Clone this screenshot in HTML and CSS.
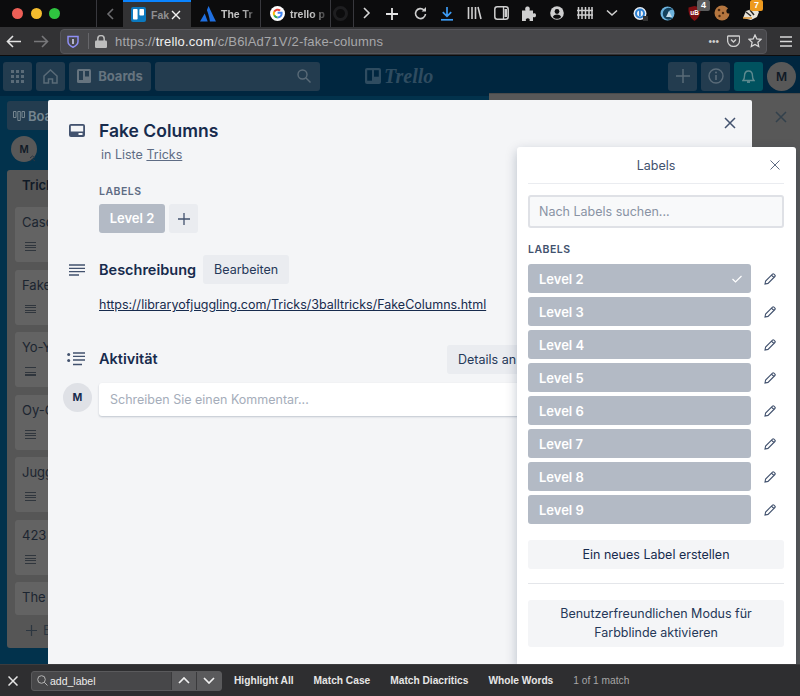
FILE: index.html
```html
<!DOCTYPE html>
<html lang="de">
<head>
<meta charset="utf-8">
<title>Fake Columns</title>
<link rel="stylesheet" href="styles.css">
</head>
<body>
<div class="browser">

  <div class="tabbar">
    <div class="lights"><i class="red"></i><i class="yellow"></i><i class="green"></i></div>
    <div class="tabscroll">
      <svg width="9" height="14" viewBox="0 0 9 14"><path d="M7 2 2 7l5 5" fill="none" stroke="#6d6d70" stroke-width="1.6"/></svg>
    </div>
    <div class="tab active">
      <svg width="15" height="15" viewBox="0 0 15 15"><rect width="15" height="15" rx="2" fill="#0b79bf"/><rect x="2" y="2" width="4.6" height="10.5" rx=".8" fill="#fff"/><rect x="8.4" y="2" width="4.6" height="6.6" rx=".8" fill="#fff"/></svg>
      <span class="tabtitle">Fak</span>
      <svg class="tabclose" width="10" height="10" viewBox="0 0 10 10"><path d="M1 1l8 8M9 1 1 9" stroke="#f2f2f2" stroke-width="1.4"/></svg>
    </div>
    <div class="tab">
      <svg width="16" height="16" viewBox="0 0 16 16"><path d="M8.6 0c2.2 4.6 4.6 10.4 7.4 15.5h-6.100C9.500 11 7.600 6 6.900 4.300 7.400 2.900 8 1.300 8.600 0zM4.700 7.500 7.700 15.500H0z" fill="#1f6fe0"/></svg>
      <span class="tabtitle">The Tr</span>
    </div>
    <div class="tab">
      <svg width="15" height="15" viewBox="0 0 15 15"><circle cx="7.500" cy="7.500" r="7.500" fill="#fff"/><path d="M7.600 6.800h4c.3 2.600-1.300 4.600-4 4.600" fill="none" stroke="#4285f4" stroke-width="2"/><path d="M4.200 5.800a3.800 3.800 0 0 1 5.900-1.200" fill="none" stroke="#ea4335" stroke-width="2"/><path d="M3.800 7.500c0-.6.100-1.200.4-1.700M3.800 7.500c0 .6.100 1.200.4 1.800" fill="none" stroke="#fbbc05" stroke-width="2"/><path d="M4.200 9.300a3.800 3.800 0 0 0 3.400 2.100" fill="none" stroke="#34a853" stroke-width="2"/></svg>
      <span class="tabtitle">trello p</span>
    </div>
    <div class="tab stub">
      <svg width="15" height="15" viewBox="0 0 15 15"><circle cx="7.500" cy="7.500" r="6" fill="none" stroke="#1e1e20" stroke-width="3"/></svg>
    </div>
    <div class="tabtools">
      <svg class="t-next" width="9" height="14" viewBox="0 0 9 14"><path d="M2 2l5 5-5 5" fill="none" stroke="#d6d6d6" stroke-width="1.600"/></svg>
      <svg class="t-plus" width="14" height="14" viewBox="0 0 14 14"><path d="M7 1v12M1 7h12" stroke="#e4e4e4" stroke-width="1.800"/></svg>
      <svg class="t-reload" width="15" height="15" viewBox="0 0 15 15"><path d="M12.500 8a5 5 0 1 1-1.500-4" fill="none" stroke="#cfcfcf" stroke-width="1.600"/><path d="M13 1v4.400H8.600z" fill="#cfcfcf"/></svg>
      <svg class="t-down" width="14" height="15" viewBox="0 0 14 15"><path d="M7 1v9M2.800 6.200 7 10.400l4.200-4.200" fill="none" stroke="#3d9bf3" stroke-width="1.700"/><path d="M1 13.800h12" stroke="#3d9bf3" stroke-width="1.700"/></svg>
      <svg class="t-lib" width="15" height="14" viewBox="0 0 15 14"><path d="M1.500 1v12M5 1v12M8.500 1v12M11 1l3 12" stroke="#cfcfcf" stroke-width="1.600" fill="none"/></svg>
      <svg class="t-side" width="15" height="14" viewBox="0 0 15 14"><rect x=".8" y=".8" width="13.400" height="12.400" rx="2.500" fill="none" stroke="#cfcfcf" stroke-width="1.500"/><path d="M9.500 1v12" stroke="#cfcfcf" stroke-width="1.300"/><path d="M10.500 3h2.500v8h-2.500z" fill="#cfcfcf"/></svg>
      <svg class="t-puzzle" width="15" height="15" viewBox="0 0 15 15"><path d="M1 4.500h3.500c-1-2.500.5-4 2-4s3 1.500 2 4H12v3.200c2-.9 3-.1 3 1.600s-1 2.600-3 1.700V15H8.500c.8-2-.3-2.800-1.700-2.800S4.300 13 5 15H1z" fill="#cfcfcf"/></svg>
      <svg class="t-acct" width="14" height="14" viewBox="0 0 14 14"><circle cx="7" cy="7" r="6.800" fill="#cfcfcf"/><circle cx="7" cy="5.500" r="2.400" fill="#0c0c0d"/><path d="M2.800 11c1-2 2.500-2.600 4.200-2.600s3.200.6 4.200 2.600C10 12.300 8.500 12.800 7 12.800S4 12.300 2.800 11z" fill="#0c0c0d"/></svg>
      <svg class="t-fence" width="16" height="14" viewBox="0 0 16 14"><path d="M1.500 1v12M5 1v12M8.500 1v12M12 1v12M15 1v12M0 4.500h16M0 9h16" stroke="#cfcfcf" stroke-width="1.500" fill="none"/></svg>
      <svg class="t-more" width="12" height="8" viewBox="0 0 12 8"><path d="M1 1.500 6 6l5-4.500" fill="none" stroke="#cfcfcf" stroke-width="1.600"/></svg>
      <svg class="t-ext1" width="15" height="15" viewBox="0 0 15 15"><circle cx="7" cy="7.500" r="6.500" fill="#e8eef4"/><circle cx="7" cy="7.500" r="4" fill="none" stroke="#2c7fd0" stroke-width="2"/><rect x="6" y="4" width="1.800" height="6" fill="#2c7fd0"/><rect x="10" y="10" width="5" height="5" fill="#333"/></svg>
      <svg class="t-ext2" width="15" height="15" viewBox="0 0 15 15"><circle cx="7.500" cy="7.500" r="7" fill="#6db3dd"/><path d="M13 3.500a6 6 0 1 0 0 8.500 5 5 0 0 1-5-4.500 5 5 0 0 1 5-4z" fill="#14425e"/><path d="M6 11 9 5l3 6z" fill="#c5dcea"/></svg>
      <svg class="t-ublock" width="13" height="15" viewBox="0 0 13 15"><path d="M.5 1.500 6.500 0l6 1.500c.4 6-1.600 10.500-6 13.500C2.100 12 .1 7.500.5 1.500z" fill="#7f0f12"/><text x="6.500" y="9" class="ub">uB</text></svg>
      <svg class="t-cookie" width="16" height="16" viewBox="0 0 16 16"><circle cx="8" cy="8" r="7.500" fill="#b5763f"/><circle cx="5" cy="5" r="1.300" fill="#4c2a12"/><circle cx="9" cy="8" r="1.200" fill="#4c2a12"/><circle cx="5.500" cy="11" r="1.200" fill="#4c2a12"/><circle cx="15" cy="6" r="2.600" fill="#0c0c0d"/></svg>
      <svg class="t-tiger" width="18" height="13" viewBox="0 0 18 13"><path d="M1 11 4 4l9-3 4 4-2 5-6 3z" fill="#e8e4da"/><path d="M4 5l5 4M8 3l4 5" stroke="#2b2b2b" stroke-width="1.500"/><path d="M1 11h9" stroke="#d8912c" stroke-width="1.500"/></svg>
      <span class="ext-badge gray">4</span>
      <span class="ext-badge orange">7</span>
    </div>
  </div>

  <div class="toolbar">
    <svg class="nav-back" width="15" height="13" viewBox="0 0 15 13"><path d="M15 6.500H2M7 1 1.500 6.500 7 12" fill="none" stroke="#e2e2e2" stroke-width="1.600"/></svg>
    <svg class="nav-fwd" width="15" height="13" viewBox="0 0 15 13"><path d="M0 6.500h13M8 1l5.500 5.500L8 12" fill="none" stroke="#77777a" stroke-width="1.600"/></svg>
    <div class="urlbar">
      <svg width="12" height="13" viewBox="0 0 12 13"><path d="M1 1.500h10v5c0 2.800-2.200 4.500-5 5.700-2.800-1.200-5-2.900-5-5.700z" fill="none" stroke="#8f8ff5" stroke-width="1.500"/><path d="M6 4v5" stroke="#d8d8f8" stroke-width="1.500"/></svg>
      <span class="urlsep"></span>
      <svg width="12" height="13" viewBox="0 0 12 13"><rect x="0" y="5.500" width="12" height="7.500" rx="1.200" fill="#bdbdbd"/><path d="M2.800 6V3.800a3.200 3.200 0 0 1 6.400 0V6" fill="none" stroke="#bdbdbd" stroke-width="1.500"/></svg>
      <span class="url">https://<b>trello.com</b>/c/B6lAd71V/2-fake-columns</span>
      <span class="dots">•••</span>
      <svg width="13" height="12" viewBox="0 0 13 12"><path d="M1 1h11a.6.600 0 0 1 .6.600V5.500a6 6 0 0 1-12 0V1.600A.6.600 0 0 1 1 1z" fill="none" stroke="#cfcfcf" stroke-width="1.300"/><path d="M4 4.500l2.500 2.500L9 4.500" fill="none" stroke="#cfcfcf" stroke-width="1.400"/></svg>
      <svg width="14" height="14" viewBox="0 0 14 14"><path d="M7 1l1.800 3.900 4.200.5-3.100 2.900.8 4.200L7 10.400l-3.700 2.100.8-4.200L1 5.400l4.200-.5z" fill="none" stroke="#d8d8d8" stroke-width="1.300"/></svg>
    </div>
    <svg class="menu" width="12" height="11" viewBox="0 0 12 11"><path d="M0 1h12M0 5.500h12M0 10h12" stroke="#d8d8d8" stroke-width="1.600"/></svg>
  </div>

  <div class="page">
    <header class="trello-head">
      <span class="hbtn">
        <svg width="13" height="13" viewBox="0 0 13 13" fill="#5a6b78"><rect width="3" height="3"/><rect x="5" width="3" height="3"/><rect x="10" width="3" height="3"/><rect y="5" width="3" height="3"/><rect x="5" y="5" width="3" height="3"/><rect x="10" y="5" width="3" height="3"/><rect y="10" width="3" height="3"/><rect x="5" y="10" width="3" height="3"/><rect x="10" y="10" width="3" height="3"/></svg>
      </span>
      <span class="hbtn">
        <svg width="15" height="15" viewBox="0 0 15 15"><path d="M1 7 7.500 1 14 7v7H9.500v-4h-4v4H1z" fill="none" stroke="#5a6b78" stroke-width="1.500"/></svg>
      </span>
      <span class="hbtn boards">
        <svg width="14" height="14" viewBox="0 0 14 14"><rect width="14" height="14" rx="1.500" fill="#66747f"/><rect x="2" y="2" width="4" height="9" fill="#253d50"/><rect x="8" y="2" width="4" height="5.500" fill="#253d50"/></svg>
        Boards
      </span>
      <span class="hsearch">
        <svg width="14" height="14" viewBox="0 0 14 14"><circle cx="5.500" cy="5.500" r="4.500" fill="none" stroke="#5a6b78" stroke-width="1.400"/><path d="M9 9l4.500 4.500" stroke="#5a6b78" stroke-width="1.400"/></svg>
      </span>
      <span class="logo">
        <svg width="16" height="16" viewBox="0 0 16 16"><rect width="16" height="16" rx="2" fill="#2f4c60"/><rect x="2.200" y="2.200" width="4.800" height="10.500" fill="#00263f"/><rect x="9" y="2.200" width="4.800" height="6.500" fill="#00263f"/></svg>
        Trello
      </span>
      <span class="hbtn push">
        <svg width="14" height="14" viewBox="0 0 14 14"><path d="M7 0v14M0 7h14" stroke="#5a6b78" stroke-width="1.500"/></svg>
      </span>
      <span class="hbtn">
        <svg width="16" height="16" viewBox="0 0 16 16"><circle cx="8" cy="8" r="7" fill="none" stroke="#5a6b78" stroke-width="1.400"/><path d="M8 7v5" stroke="#5a6b78" stroke-width="1.600"/><circle cx="8" cy="4.600" r="1" fill="#5a6b78"/></svg>
      </span>
      <span class="hbtn bell">
        <svg width="13" height="15" viewBox="0 0 13 15"><path d="M1 11.500c1.200-1 1.500-2 1.500-4.500C2.500 4 4.200 2 6.500 2s4 2 4 5c0 2.500.3 3.500 1.500 4.500z" fill="none" stroke="#5e8a8f" stroke-width="1.400"/><path d="M5 13h3" stroke="#5e8a8f" stroke-width="1.800"/></svg>
      </span>
      <span class="havatar">M</span>
    </header>

    <div class="board">
      <div class="board-left">
        <span class="boardbtn">
          <svg width="12" height="10" viewBox="0 0 12 10"><path d="M.5.500h2.500v6H.5zM4.800.500h2.500v9H4.800zM9 .500h2.500v6H9z" fill="none" stroke="#75858f" stroke-width="1"/></svg>
          Boa
        </span>
        <span class="member">M
          <svg class="chev" width="7" height="7" viewBox="0 0 7 7"><path d="M1 3l2.500-2L6 3M1 6l2.500-2L6 6" fill="none" stroke="#2c3640" stroke-width="1"/></svg>
        </span>
        <div class="list">
          <div class="listname">Tricks</div>
          <div class="card"><span>Casc</span><i class="lines"></i></div>
          <div class="card"><span>Fake</span><i class="lines"></i></div>
          <div class="card"><span>Yo-Y</span><i class="lines"></i></div>
          <div class="card"><span>Oy-O</span><i class="lines"></i></div>
          <div class="card"><span>Jugg</span><i class="lines"></i></div>
          <div class="card"><span>423</span><i class="lines"></i></div>
          <div class="card short"><span>The</span></div>
          <div class="addcard">
            <svg width="11" height="11" viewBox="0 0 11 11"><path d="M5.500 0v11M0 5.500h11" stroke="#2c3640" stroke-width="1.200"/></svg>
            E
          </div>
        </div>
      </div>
      <div class="sidepanel">
        <svg width="12" height="12" viewBox="0 0 12 12"><path d="M1 1l10 10M11 1 1 11" stroke="#33414c" stroke-width="1.500"/></svg>
      </div>
    </div>

    <div class="modal">
      <svg class="modal-close" width="12" height="12" viewBox="0 0 12 12"><path d="M1 1l10 10M11 1 1 11" stroke="#42526e" stroke-width="1.500"/></svg>

      <div class="row title-row">
        <svg class="ico" width="16" height="14" viewBox="0 0 16 14"><rect x="0" y="0" width="16" height="13" rx="2" fill="#42526e"/><rect x="1.800" y="1.800" width="12.400" height="5.700" fill="#f4f5f7"/><rect x="9.500" y="9" width="4" height="2" fill="#f4f5f7"/></svg>
        <div>
          <h1>Fake Columns</h1>
          <p class="inlist">in Liste <a>Tricks</a></p>
        </div>
      </div>

      <div class="labels-block">
        <h3>LABELS</h3>
        <div class="chips">
          <span class="chip">Level 2</span>
          <span class="chip-add"><svg width="12" height="12" viewBox="0 0 12 12"><path d="M6 0v12M0 6h12" stroke="#42526e" stroke-width="1.300"/></svg></span>
        </div>
      </div>

      <div class="row desc-row">
        <svg class="ico" width="16" height="12" viewBox="0 0 16 12"><path d="M0 1h16M0 4.300h16M0 7.600h16M0 11h10" stroke="#42526e" stroke-width="1.300"/></svg>
        <h2>Beschreibung</h2>
        <span class="btn">Bearbeiten</span>
      </div>
      <a class="desc-link">https://libraryofjuggling.com/Tricks/3balltricks/FakeColumns.html</a>

      <div class="row act-row">
        <svg class="ico" width="18" height="14" viewBox="0 0 18 14"><circle cx="1.700" cy="2.500" r="1.500" fill="#42526e"/><circle cx="1.700" cy="8.500" r="1.500" fill="#42526e"/><path d="M6 1h12M6 4.300h12M6 8h12M6 12.500h9" stroke="#42526e" stroke-width="1.300"/></svg>
        <h2>Aktivität</h2>
        <span class="btn details">Details an</span>
      </div>

      <div class="comment-row">
        <span class="avatar">M</span>
        <div class="comment">Schreiben Sie einen Kommentar...</div>
      </div>
    </div>

    <div class="popover">
      <div class="pop-head">
        <span>Labels</span>
        <svg width="10" height="10" viewBox="0 0 10 10"><path d="M.5.500l9 9M9.500.500l-9 9" stroke="#5e6c84" stroke-width="1"/></svg>
      </div>
      <div class="pop-search">Nach Labels suchen...</div>
      <h3>LABELS</h3>
      <ul class="label-list">
        <li><span class="lab">Level 2<svg width="10" height="8" viewBox="0 0 10 8"><path d="M.5 4l3 3L9.500 1" fill="none" stroke="#fff" stroke-width="1.200"/></svg></span><svg class="pen" width="12" height="12" viewBox="0 0 12 12"><path d="M1 11l.6-3L8.500 1.100a1 1 0 0 1 1.400 0l1 1a1 1 0 0 1 0 1.400L4 10.400zM7.500 2.200l2.300 2.300" fill="none" stroke="#42526e" stroke-width="1.100"/></svg></li>
        <li><span class="lab">Level 3</span><svg class="pen" width="12" height="12" viewBox="0 0 12 12"><path d="M1 11l.6-3L8.500 1.100a1 1 0 0 1 1.400 0l1 1a1 1 0 0 1 0 1.400L4 10.400zM7.500 2.200l2.300 2.300" fill="none" stroke="#42526e" stroke-width="1.100"/></svg></li>
        <li><span class="lab">Level 4</span><svg class="pen" width="12" height="12" viewBox="0 0 12 12"><path d="M1 11l.6-3L8.500 1.100a1 1 0 0 1 1.400 0l1 1a1 1 0 0 1 0 1.400L4 10.400zM7.500 2.200l2.300 2.300" fill="none" stroke="#42526e" stroke-width="1.100"/></svg></li>
        <li><span class="lab">Level 5</span><svg class="pen" width="12" height="12" viewBox="0 0 12 12"><path d="M1 11l.6-3L8.500 1.100a1 1 0 0 1 1.400 0l1 1a1 1 0 0 1 0 1.400L4 10.400zM7.500 2.200l2.300 2.300" fill="none" stroke="#42526e" stroke-width="1.100"/></svg></li>
        <li><span class="lab">Level 6</span><svg class="pen" width="12" height="12" viewBox="0 0 12 12"><path d="M1 11l.6-3L8.500 1.100a1 1 0 0 1 1.400 0l1 1a1 1 0 0 1 0 1.400L4 10.400zM7.500 2.200l2.300 2.300" fill="none" stroke="#42526e" stroke-width="1.100"/></svg></li>
        <li><span class="lab">Level 7</span><svg class="pen" width="12" height="12" viewBox="0 0 12 12"><path d="M1 11l.6-3L8.500 1.100a1 1 0 0 1 1.400 0l1 1a1 1 0 0 1 0 1.400L4 10.400zM7.500 2.200l2.300 2.300" fill="none" stroke="#42526e" stroke-width="1.100"/></svg></li>
        <li><span class="lab">Level 8</span><svg class="pen" width="12" height="12" viewBox="0 0 12 12"><path d="M1 11l.6-3L8.500 1.100a1 1 0 0 1 1.400 0l1 1a1 1 0 0 1 0 1.400L4 10.400zM7.500 2.200l2.300 2.300" fill="none" stroke="#42526e" stroke-width="1.100"/></svg></li>
        <li><span class="lab">Level 9</span><svg class="pen" width="12" height="12" viewBox="0 0 12 12"><path d="M1 11l.6-3L8.500 1.100a1 1 0 0 1 1.400 0l1 1a1 1 0 0 1 0 1.400L4 10.400zM7.500 2.200l2.300 2.300" fill="none" stroke="#42526e" stroke-width="1.100"/></svg></li>
      </ul>
      <div class="pop-btn">Ein neues Label erstellen</div>
      <hr>
      <div class="pop-btn tall">Benutzerfreundlichen Modus für Farbblinde aktivieren</div>
    </div>
  </div>

  <div class="findbar">
    <svg class="find-x" width="10" height="10" viewBox="0 0 10 10"><path d="M.5.500l9 9M9.500.500l-9 9" stroke="#e6e6e6" stroke-width="1.500"/></svg>
    <div class="find-input">
      <svg width="11" height="11" viewBox="0 0 11 11"><circle cx="4.500" cy="4.500" r="3.800" fill="none" stroke="#b5b5b5" stroke-width="1"/><path d="M7.300 7.300 10.500 10.500" stroke="#b5b5b5" stroke-width="1"/></svg>
      <span class="find-q">add_label</span>
      <span class="find-nav up"><svg width="12" height="7" viewBox="0 0 12 7"><path d="M1 6l5-5 5 5" fill="none" stroke="#f0f0f0" stroke-width="1.700"/></svg></span>
      <span class="find-nav"><svg width="12" height="7" viewBox="0 0 12 7"><path d="M1 1l5 5 5-5" fill="none" stroke="#f0f0f0" stroke-width="1.700"/></svg></span>
    </div>
    <span class="find-opt">Highlight All</span>
    <span class="find-opt">Match Case</span>
    <span class="find-opt">Match Diacritics</span>
    <span class="find-opt">Whole Words</span>
    <span class="find-count">1 of 1 match</span>
  </div>

</div>
</body>
</html>
```

FILE: styles.css
```css
* {
  box-sizing: border-box;
}
html, body {
  margin: 0;
  height: 100%;
}
body {
  font-family: Inter, "Liberation Sans", sans-serif;
  background: #000;
  overflow: hidden;
}
svg {
  display: block;
  flex: none;
}
.browser {
  display: flex;
  flex-direction: column;
  height: 696px;
}

/* tab strip */
.tabbar {
  height: 27px;
  background: #0c0c0d;
  display: flex;
  align-items: stretch;
  position: relative;
}
.lights {
  width: 96px;
  display: flex;
  align-items: center;
  gap: 7.500px;
  padding: 0 0 0 12px;
}
.lights i {
  width: 11px;
  height: 11px;
  border-radius: 50%;
}
.red { background: #ed5f57; }
.yellow { background: #f5bd2e; }
.green { background: #2fc440; }
.tabscroll {
  width: 27px;
  border-left: 1px solid #38383d;
  display: flex;
  align-items: center;
  justify-content: center;
}
.tab {
  width: 70px;
  display: flex;
  align-items: center;
  gap: 5px;
  padding: 0 0 0 9px;
  border-right: 1px solid #38383d;
  color: #c4c4c4;
  font: 600 10.500px "Liberation Sans", sans-serif;
  overflow: hidden;
}
.tab.active {
  width: 68px;
  padding-left: 8px;
  background: #323234;
  border-top: 2px solid #0a84ff;
  border-right: 0;
  position: relative;
}
.tab.stub {
  width: 23px;
  padding-left: 2px;
}
.tabtitle {
  flex: 1;
  white-space: nowrap;
  -webkit-mask-image: linear-gradient(90deg, #000 55%, transparent 100%);
}
.active .tabtitle {
  flex: none;
  width: 15px;
  color: #8f8f91;
  -webkit-mask-image: none;
}
.tabclose {
  margin-left: 0;
}
.tabtools {
  flex: 1;
  position: relative;
  display: flex;
  align-items: center;
}
.tabtools svg {
  position: absolute;
}
.t-next { left: 8px; top: 6px; }
.t-plus { left: 31px; top: 7px; }
.t-reload { left: 59px; top: 6px; }
.t-down { left: 86px; top: 6px; }
.t-lib { left: 113px; top: 6px; }
.t-side { left: 140px; top: 6px; }
.t-puzzle { left: 167px; top: 6px; }
.t-acct { left: 196px; top: 6px; }
.t-fence { left: 223px; top: 6px; }
.t-more { left: 252px; top: 9px; }
.t-ext1 { left: 279px; top: 6px; }
.t-ext2 { left: 306px; top: 6px; }
.t-ublock { left: 334px; top: 6px; }
.t-cookie { left: 360px; top: 5px; }
.t-tiger { left: 388px; top: 7px; }
.ub {
  font: 700 6.500px "Liberation Sans", sans-serif;
  fill: #fff;
  text-anchor: middle;
}
.ext-badge {
  position: absolute;
  top: 0;
  width: 13px;
  height: 11px;
  border-radius: 2px;
  font: 700 9px/11px "Liberation Sans", sans-serif;
  text-align: center;
  color: #fff;
}
.ext-badge.gray { left: 343px; background: #5c5c5c; }
.ext-badge.orange { left: 396px; background: #ee9a1e; }

/* url toolbar */
.toolbar {
  height: 29px;
  background: #323234;
  display: flex;
  align-items: center;
  padding: 0 8px 0 6px;
  border-bottom: 1px solid #0c0c0d;
}
.nav-fwd {
  margin-left: 13px;
}
.urlbar {
  width: 707px;
  height: 25px;
  margin-left: 11px;
  background: #47474a;
  border: 1px solid #55555a;
  border-radius: 4px;
  display: flex;
  align-items: center;
  gap: 8px;
  padding: 0 4px 0 6px;
}
.urlsep {
  width: 1px;
  height: 16px;
  background: #66666a;
  margin: 0 -2px 0 1px;
}
.url {
  flex: 1;
  margin-left: 0;
  font: 13px "Liberation Sans", sans-serif;
  letter-spacing: .2px;
  color: #a8a8aa;
}
.url b {
  font-weight: 400;
  color: #f0f0f0;
}
.dots {
  color: #cfcfcf;
  font: 10px "Liberation Sans", sans-serif;
  letter-spacing: 0;
}
.menu {
  margin-left: 13px;
}

/* the page behind the modal */
.page {
  flex: 1;
  position: relative;
  overflow: hidden;
  background: #02324c;
  border-top: 0;
}
.trello-head {
  height: 40px;
  background: #00263f;
  display: flex;
  align-items: center;
  gap: 4px;
  padding: 0 4px 0 3px;
}
.hbtn {
  height: 29px;
  width: 29px;
  background: #233c4f;
  border-radius: 3px;
  display: flex;
  align-items: center;
  justify-content: center;
  gap: 7px;
  color: #66747f;
  font-weight: 700;
  font-size: 13px;
}
.hbtn.boards {
  width: 82px;
}
.hsearch {
  width: 165px;
  height: 29px;
  background: #233c4f;
  border-radius: 3px;
  display: flex;
  align-items: center;
  justify-content: flex-end;
  padding-right: 9px;
}
.logo {
  display: flex;
  align-items: center;
  gap: 3px;
  margin-left: 41px;
  color: #2f4c60;
  font: italic 700 20px "Liberation Serif", serif;
}
.hbtn.push {
  margin-left: auto;
}
.hbtn.bell {
  background: #00525f;
}
.havatar {
  width: 29px;
  height: 29px;
  border-radius: 50%;
  background: #585858;
  color: #101a26;
  font-weight: 600;
  font-size: 12px;
  display: flex;
  align-items: center;
  justify-content: center;
}
.board {
  display: flex;
  justify-content: space-between;
  height: 568px;
}
.board-left {
  width: 200px;
  padding: 5px 0 0 7px;
}
.boardbtn {
  height: 29px;
  width: 70px;
  background: #233c4f;
  border-radius: 3px;
  display: flex;
  align-items: center;
  gap: 3px;
  padding-left: 6px;
  color: #75858f;
  font-weight: 600;
  font-size: 13px;
}
.member {
  display: flex;
  position: relative;
  margin: 6px 0 8px 4px;
  width: 26px;
  height: 26px;
  border-radius: 50%;
  background: #585858;
  align-items: center;
  justify-content: center;
  font-size: 10px;
  font-weight: 600;
  color: #101a26;
}
.chev {
  position: absolute;
  right: 1px;
  bottom: 0;
}
.list {
  width: 180px;
  height: 478px;
  background: #565656;
  border-radius: 3px;
  padding: 0 8px;
}
.listname {
  height: 37px;
  padding: 7px 0 0 7px;
  font-weight: 600;
  font-size: 13px;
  color: #101a26;
}
.card {
  height: 55px;
  margin-bottom: 7.500px;
  background: #636363;
  border-radius: 3px;
  padding: 7px 7px;
  font-size: 13px;
  color: #1c2530;
  white-space: nowrap;
}
.card.short {
  height: 33px;
}
.lines {
  display: block;
  width: 11px;
  height: 9px;
  margin: 12px 0 0 3px;
  background: repeating-linear-gradient(#30363d 0 1px, transparent 1px 2.500px);
}
.addcard {
  display: flex;
  align-items: center;
  gap: 6px;
  padding: 0 0 0 11px;
  height: 15px;
  color: #2c3640;
  font-size: 13px;
}
.sidepanel {
  width: 311px;
  margin-top: -3px;
  background: #585858;
  padding: 17px 13px 0 0;
  display: flex;
  justify-content: flex-end;
  align-items: flex-start;
  border-top: 1px solid #4a4a4a;
}

/* card modal */
.modal {
  position: absolute;
  left: 48px;
  top: 44px;
  width: 704px;
  height: 564px;
  background: #f4f5f7;
  border-radius: 2px 2px 0 0;
  padding: 20px 0 0 21px;
  color: #172b4d;
}
.modal-close {
  position: absolute;
  top: 17px;
  right: 16px;
}
.row {
  display: flex;
  align-items: center;
}
.ico {
  margin-right: 14px;
}
.title-row {
  align-items: flex-start;
}
.title-row .ico {
  margin: 4px 14px 0 0;
}
h1 {
  margin: 0;
  font-size: 17.500px;
  line-height: 22px;
  font-weight: 600;
}
.inlist {
  margin: 3px 0 0 2px;
  font-size: 12.500px;
  line-height: 20px;
  color: #5e6c84;
}
.inlist a,
.desc-link {
  text-decoration: underline;
}
.labels-block {
  margin: 19px 0 0 30px;
}
h3 {
  margin: 0;
  font-size: 10.500px;
  line-height: 16px;
  font-weight: 600;
  letter-spacing: .5px;
  color: #5e6c84;
}
.chips {
  display: flex;
  gap: 4px;
  margin-top: 4px;
}
.chip {
  width: 66px;
  height: 29px;
  border-radius: 3px;
  background: #b3bac5;
  color: #fff;
  font-size: 13px;
  font-weight: 600;
  line-height: 29px;
  text-align: center;
}
.chip-add {
  width: 29px;
  height: 29px;
  border-radius: 3px;
  background: #eaecf0;
  display: flex;
  align-items: center;
  justify-content: center;
}
.desc-row {
  margin-top: 22px;
}
h2 {
  margin: 0;
  font-size: 14.500px;
  font-weight: 600;
  line-height: 20px;
}
.btn {
  height: 29px;
  padding: 0 11px;
  margin-left: 7px;
  background: #eaecf0;
  border-radius: 3px;
  font-size: 12.500px;
  line-height: 29px;
  color: #253858;
  white-space: nowrap;
}
.desc-link {
  display: block;
  margin: 11px 0 0 30px;
  font-size: 12.500px;
  line-height: 20px;
}
.act-row {
  margin-top: 34px;
}
.act-row .ico {
  margin-left: -2px;
  margin-right: 14px;
}
.btn.details {
  position: absolute;
  left: 399px;
  width: 90px;
  margin: 0;
}
.comment-row {
  display: flex;
  margin: 14px 0 0 -6px;
  gap: 7px;
}
.avatar {
  width: 29px;
  height: 29px;
  border-radius: 50%;
  background: #dfe1e6;
  font-size: 10.500px;
  font-weight: 700;
  display: flex;
  align-items: center;
  justify-content: center;
}
.comment {
  width: 600px;
  height: 33px;
  background: #fff;
  border-radius: 3px;
  box-shadow: 0 1px 2px rgba(9, 30, 66, .22);
  padding: 0 11px;
  font-size: 12.500px;
  line-height: 33px;
  color: #a5adba;
}

/* labels popover */
.popover {
  position: absolute;
  left: 517px;
  top: 91px;
  width: 279px;
  height: 520px;
  background: #fff;
  border-radius: 3px 3px 0 0;
  box-shadow: 0 4px 12px rgba(9, 30, 66, .25);
  padding: 0 12px 0 11px;
  color: #172b4d;
}
.pop-head {
  height: 37px;
  border-bottom: 1px solid #eaecf0;
  display: flex;
  align-items: center;
  justify-content: center;
  font-size: 12.500px;
  color: #42526e;
  position: relative;
}
.pop-head svg {
  position: absolute;
  right: 4px;
  top: 13px;
}
.pop-search {
  margin-top: 11px;
  height: 33px;
  border: 2px solid #dfe1e6;
  border-radius: 3px;
  background: #f8f9fa;
  font-size: 12.500px;
  line-height: 29px;
  padding-left: 9px;
  color: #8993a4;
}
.popover h3 {
  margin-top: 14px;
  color: #42526e;
}
.label-list {
  list-style: none;
  margin: 6px 0 0;
  padding: 0;
  display: flex;
  flex-direction: column;
  gap: 4px;
}
.label-list li {
  display: flex;
  align-items: center;
  justify-content: space-between;
  padding-right: 8px;
}
.lab {
  width: 223px;
  height: 29px;
  border-radius: 3px;
  background: #b3bac5;
  color: #fff;
  font-size: 13px;
  font-weight: 600;
  display: flex;
  align-items: center;
  justify-content: space-between;
  padding: 0 9px 0 11px;
}
.pop-btn {
  margin-top: 16px;
  min-height: 29px;
  padding: 0 20px;
  border-radius: 3px;
  background: #f4f5f7;
  font-size: 12.500px;
  line-height: 29px;
  text-align: center;
}
.pop-btn.tall {
  margin-top: 16px;
  padding: 5px 20px;
  line-height: 18.500px;
  color: #253858;
}
hr {
  border: 0;
  border-top: 1px solid #e4e6ea;
  margin: 14px 0 0;
}

/* find in page */
.findbar {
  height: 32px;
  background: #2e2e30;
  border-top: 1px solid #3c3c3e;
  display: flex;
  align-items: center;
  font: 600 10.200px "Liberation Sans", sans-serif;
  color: #e6e6e6;
  padding-left: 8px;
}
.find-input {
  margin-left: 13px;
  width: 191px;
  height: 20px;
  background: #474749;
  border: 1px solid #5a5a5c;
  border-radius: 3px;
  display: flex;
  align-items: center;
  padding-left: 5px;
}
.find-q {
  flex: 1;
  margin-left: 2px;
  color: #ececec;
  font-size: 10.500px;
  font-weight: 400;
}
.find-nav {
  width: 25px;
  height: 18px;
  border-left: 1px solid #3a3a3c;
  background: #5a5a5c;
  display: flex;
  align-items: center;
  justify-content: center;
}
.find-opt {
  margin-left: 20px;
  white-space: nowrap;
}
.find-input + .find-opt {
  margin-left: 12px;
}
.find-count {
  margin-left: 20px;
  color: #a6a6a6;
  font-weight: 400;
}
```
